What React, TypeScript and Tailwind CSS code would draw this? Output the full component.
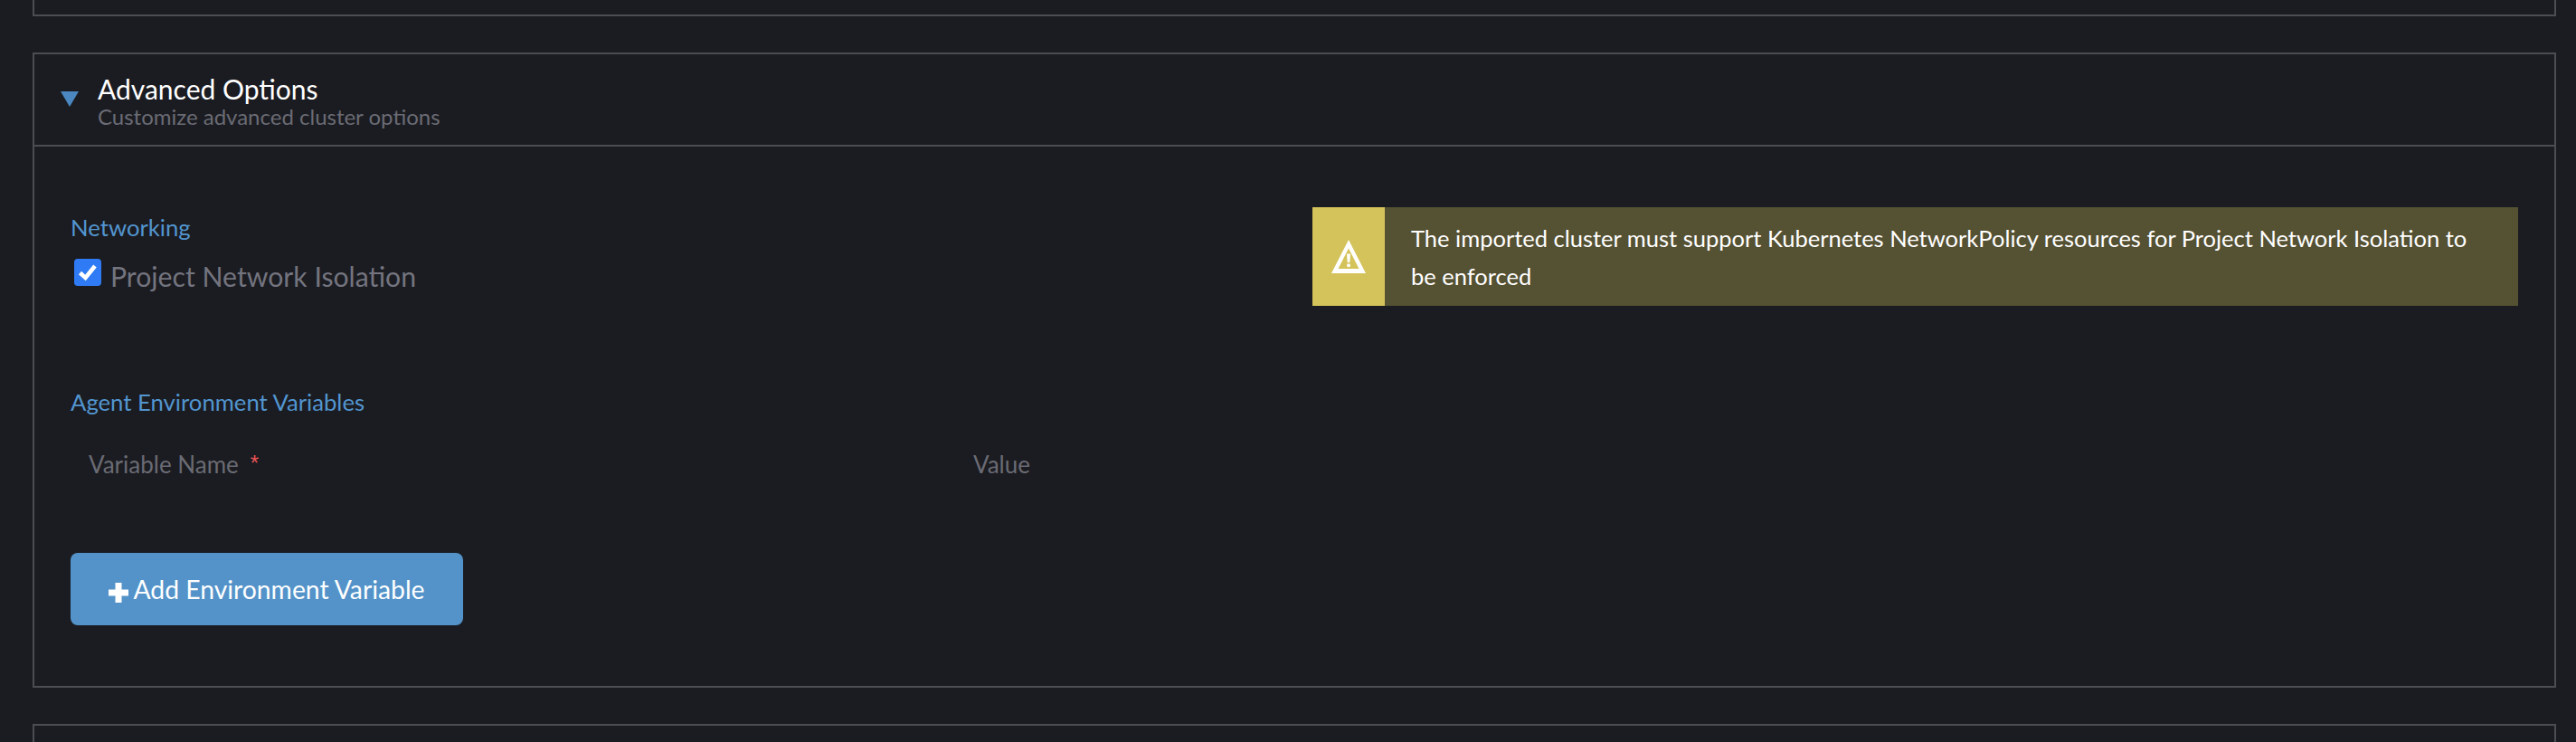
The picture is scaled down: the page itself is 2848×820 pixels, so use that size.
export default function App() {
  return (
    <div className="h-[820px] overflow-hidden bg-[#1b1c21] pl-[36px] pr-[22px] font-['Lato',sans-serif]">
      <div className="h-[18px] border-x-2 border-b-2 border-[#4c4d53]" />
      <div className="mt-[40px] h-[702px] border-2 border-[#4c4d53]">
        <div className="flex h-[102px] border-b-2 border-[#4c4d53] pl-[29px]">
          <svg className="mt-[41px] shrink-0" width="20" height="17" viewBox="0 0 20 17">
            <path d="M0 0H20L10 17Z" fill="#4b87c0" />
          </svg>
          <div className="ml-[21px] pt-[20px]">
            <div className="text-[30px] leading-[36px] text-white">Advanced Options</div>
            <div className="text-[24px] leading-[26px] text-[#6a6b74]">Customize advanced cluster options</div>
          </div>
        </div>
        <div className="px-[40px] pt-[67px]">
          <div className="grid h-[109px] grid-cols-2 gap-[40px]">
            <div>
              <div className="pt-[6px] text-[25.7px] leading-[32px] text-[#5295d0]">Networking</div>
              <label className="mt-[19px] flex items-start pl-[4px]">
                <span className="flex h-[30px] w-[30px] items-center justify-center rounded-[4px] bg-[#2f7bf5]">
                  <svg width="22" height="20" viewBox="0 0 22 20">
                    <path d="M2.5 10.5L8.5 16L19 3" fill="none" stroke="#fff" strokeWidth="4.6" />
                  </svg>
                </span>
                <span className="ml-[10px] text-[30.2px] leading-[38px] text-[#73747f]">Project Network Isolation</span>
              </label>
            </div>
            <div className="flex bg-[#555133]">
              <div className="flex w-[80px] shrink-0 items-center justify-center bg-[#d4c35b]">
                <svg width="38" height="37" viewBox="0 0 38 37">
                  <path fillRule="evenodd" d="M19 0L38 37H0ZM19 9.5L7.5 32H30.5Z" fill="#fff" />
                  <path d="M17 15.5H21L20.3 25H17.7Z" fill="#fff" />
                  <circle cx="19" cy="28.3" r="2" fill="#fff" />
                </svg>
              </div>
              <div className="pb-[12px] pl-[29px] pr-[30px] pt-[13px] text-[25.5px] leading-[42px] text-white">
                The imported cluster must support Kubernetes NetworkPolicy resources for Project Network Isolation to be enforced
              </div>
            </div>
          </div>
          <div className="mt-[90px] text-[25.7px] leading-[32px] text-[#5295d0]">Agent Environment Variables</div>
          <div className="mt-[37px] flex pl-[20px] text-[26px] leading-[32px] text-[#6a6b74]">
            <div className="w-[978px]">
              Variable Name
              <span className="relative top-[-3px] ml-[13px] font-['Liberation_Sans',sans-serif] text-[24px] text-[#ea5455]">*</span>
            </div>
            <div>Value</div>
          </div>
          <button className="mt-[80px] flex h-[80px] w-[434px] items-center justify-center rounded-[8px] bg-[#5393c9] text-[28.3px] text-white">
            <svg className="mr-[5px] mt-[8px]" width="22" height="22" viewBox="0 0 22 22">
              <path d="M7.5 0H14.5V7.5H22V14.5H14.5V22H7.5V14.5H0V7.5H7.5Z" fill="#fff" />
            </svg>
            Add Environment Variable
          </button>
        </div>
      </div>
      <div className="mt-[40px] h-[20px] border-x-2 border-t-2 border-[#4c4d53]" />
    </div>
  );
}
